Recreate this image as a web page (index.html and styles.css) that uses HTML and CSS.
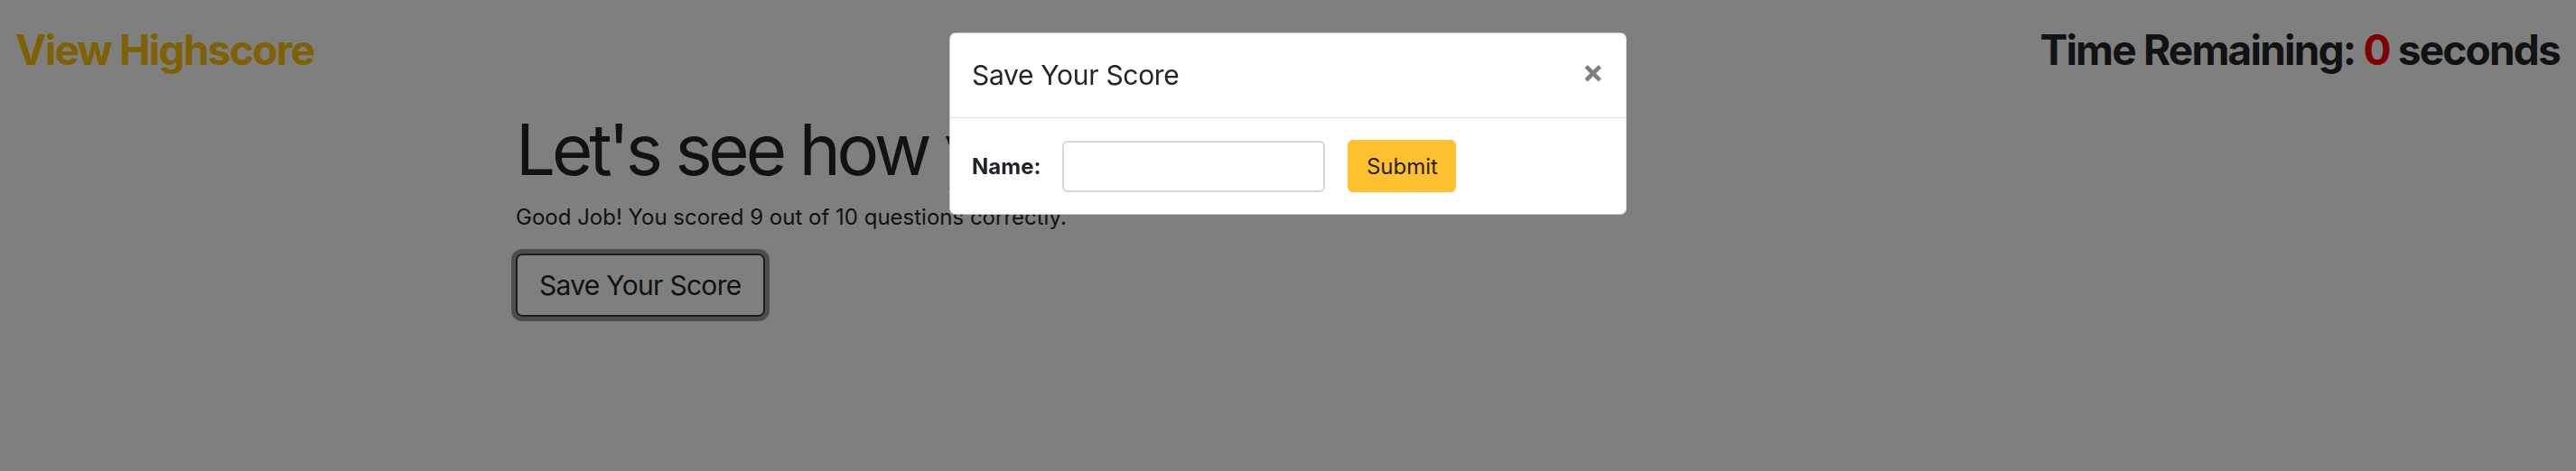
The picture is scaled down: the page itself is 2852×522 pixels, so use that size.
FILE: index.html
```html
<!DOCTYPE html>
<html lang="en">
<head>
<meta charset="utf-8">
<title>Quiz Result</title>
<link rel="stylesheet" href="styles.css">
</head>
<body>
<header class="topbar">
  <a class="highscore" href="#">View Highscore</a>
  <div class="timer">Time Remaining: <span class="count">0</span> seconds</div>
</header>
<main class="container">
  <h1 class="display">Let's see how you did!</h1>
  <p class="result">Good Job! You scored 9 out of 10 questions correctly.</p>
  <button class="btn-outline" type="button">Save Your Score</button>
</main>
<div class="backdrop"></div>
<div class="modal">
  <div class="modal-dialog">
    <div class="modal-content">
      <div class="modal-header">
        <h5 class="modal-title">Save Your Score</h5>
        <button class="close" type="button" aria-label="Close">&times;</button>
      </div>
      <div class="modal-body">
        <form class="name-form">
          <label class="name-label" for="name">Name:</label>
          <input class="name-input" id="name" type="text">
          <button class="btn-submit" type="button">Submit</button>
        </form>
      </div>
    </div>
  </div>
</div>
</body>
</html>
```
FILE: styles.css
```css
html, body {
  margin: 0;
  padding: 0;
}
body {
  font-family: Inter, "Liberation Sans", Arial, sans-serif;
  color: #212529;
  background: #ffffff;
  width: 2852px;
  height: 522px;
  overflow: hidden;
}
.topbar {
  display: flex;
  justify-content: space-between;
  align-items: baseline;
  padding: 28px 18px 0 17px;
}
.highscore {
  font-size: 46px;
  font-weight: 700;
  line-height: 1.2;
  letter-spacing: -1.7px;
  color: #ffc107;
  text-decoration: none;
}
.timer {
  font-size: 46px;
  font-weight: 700;
  line-height: 1.2;
  letter-spacing: -1.8px;
  color: #212529;
}
.count {
  color: #ff0000;
}
.container {
  width: 1710px;
  margin: 0 auto;
}
.display {
  font-size: 78px;
  font-weight: 400;
  line-height: 1.2;
  letter-spacing: -4.2px;
  margin: 36px 0 10px;
}
.result {
  font-size: 24px;
  line-height: 1.5;
  margin: 0 0 22px;
}
.btn-outline {
  font-family: inherit;
  font-size: 30px;
  line-height: 42px;
  letter-spacing: -0.7px;
  padding: 12px 24px;
  color: #212529;
  background: transparent;
  border: 2px solid #343a40;
  border-radius: 7px;
  box-shadow: 0 0 0 5px rgba(52, 58, 64, 0.5);
}
.backdrop {
  position: fixed;
  inset: 0;
  background: rgba(0, 0, 0, 0.5);
}
.modal {
  position: fixed;
  inset: 0;
}
.modal-dialog {
  width: 750px;
  margin: 36px auto 0;
}
.modal-content {
  background: #ffffff;
  border: 1px solid rgba(0, 0, 0, 0.2);
  border-radius: 7px;
}
.modal-header {
  display: flex;
  align-items: flex-start;
  padding: 24px;
  border-bottom: 1px solid #dee2e6;
}
.modal-title {
  margin: 0;
  font-size: 30px;
  font-weight: 400;
  line-height: 1.5;
  letter-spacing: -0.3px;
}
.close {
  margin: -24px -24px -24px auto;
  padding: 24px;
  background: transparent;
  border: 0;
  font-family: inherit;
  font-size: 36px;
  font-weight: 700;
  line-height: 1;
  color: #000;
  opacity: 0.5;
}
.modal-body {
  padding: 24px;
}
.name-form {
  display: flex;
  align-items: center;
}
.name-label {
  font-size: 24px;
  font-weight: 700;
  margin-right: 24px;
}
.name-input {
  box-sizing: border-box;
  width: 291px;
  height: 57px;
  border: 2px solid #d3d8dd;
  border-radius: 6px;
  margin-right: 25px;
  font-size: 24px;
}
.btn-submit {
  box-sizing: border-box;
  width: 120px;
  height: 58px;
  border: 0;
  border-radius: 6px;
  background: #ffc12f;
  color: #212529;
  font-family: inherit;
  font-size: 24px;
}
```
